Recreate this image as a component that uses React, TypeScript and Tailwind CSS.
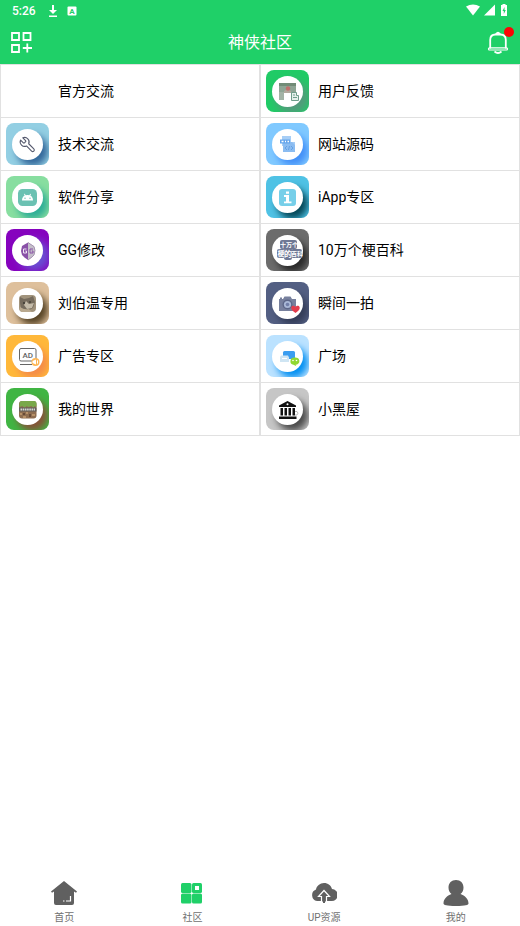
import type { ReactNode } from "react";

type Board = {
  name: string;
  tile?: string;
  shadow?: string;
  icon?: ReactNode;
};

const boards: Board[] = [
  { name: "官方交流" },
  {
    name: "用户反馈",
    tile: "bg-[#20cb66]",
    shadow: "shadow-[5px_6px_8px_1px_#55997d]",
    icon: (
      <>
        <rect x="7" y="7" width="17" height="11" fill="#8fa595" />
        <path d="M7 7h17v3H7z" fill="#728c78" />
        <path d="M7 16h5v8H7z" fill="#a3b3a6" />
        <path d="M12 17h7l2 7h-9z" fill="#fff" />
        <path d="M12 15q3-3 7 0v2h-7z" fill="#b3a89d" />
        <circle cx="16" cy="12.500" r="2.200" fill="#c0706c" />
        <g fill="#e5f0eb" stroke="#6f9d8b" strokeWidth="1">
          <path d="M19.500 16.500h5v3h2v5h-7z" />
          <path d="M21 19h2M21 21.500h4" />
        </g>
      </>
    ),
  },
  {
    name: "技术交流",
    tile: "bg-[#93cfe3]",
    shadow: "shadow-[5px_6px_7px_0px_#34689b]",
    icon: (
      <g transform="translate(24.500 7) scale(-.74 .74)" fill="none" stroke="#565a6e" strokeWidth="1.500" strokeLinejoin="round">
        <path d="M14.700 6.300a1 1 0 0 0 0 1.400l1.600 1.600a1 1 0 0 0 1.400 0l3.770-3.770a6 6 0 0 1-7.940 7.940l-6.910 6.910a2.120 2.120 0 0 1-3-3l6.910-6.910a6 6 0 0 1 7.940-7.940z" />
      </g>
    ),
  },
  {
    name: "网站源码",
    tile: "bg-[#80c9ff]",
    shadow: "shadow-[5px_6px_7px_0px_#4390f8]",
    icon: (
      <>
        <path d="M10 7h9v6h4v10H11V17h-1z" fill="#a7cef6" />
        <path d="M11 13h9l3 3v7H11z" fill="#8bbcf1" />
        <path d="M8 10.500h10v4H8z" fill="#65a5ec" />
        <path d="M9.500 12.500h2M13 12.500h1M15.500 12.500h1.500" stroke="#fff" strokeWidth="1.500" />
        <path d="m15 17-2 2 2 2m4-4 2 2-2 2m-1.500-4-1 4" fill="none" stroke="#5b9be2" strokeWidth=".8" />
      </>
    ),
  },
  {
    name: "软件分享",
    tile: "bg-[#88dea0]",
    shadow: "shadow-[5px_6px_7px_0px_#2fae97]",
    icon: (
      <>
        <rect x="6" y="7" width="19" height="17" rx="4.500" fill="#6bc1b2" />
        <path d="M10 18.500c0-2.400 1-4 2.700-5L12 12l.7-.3 1 1.500a8 8 0 0 1 3.600 0l1-1.500.7.3-.7 1.500c1.700 1 2.700 2.600 2.700 5z" fill="#fff" />
        <circle cx="13" cy="16.200" r=".7" fill="#6bc1b2" />
        <circle cx="18" cy="16.200" r=".7" fill="#6bc1b2" />
      </>
    ),
  },
  {
    name: "iApp专区",
    tile: "bg-[#4fc2e5]",
    shadow: "shadow-[5px_6px_7px_0px_#064858]",
    icon: (
      <>
        <rect x="7" y="7" width="17" height="17" rx="3" fill="#76cfe9" />
        <path d="M14 9.500h3v2.200h-3zM12 13h5v6.500h2.500v1.800H12v-1.800h2V15h-2z" fill="#fff" />
      </>
    ),
  },
  {
    name: "GG修改",
    tile: "bg-[#8603be]",
    shadow: "shadow-[7px_5px_8px_0px_#6950d2]",
    icon: (
      <>
        <path d="m16 7.500 3 2 3 2 1 4-1 4.500-2 2-4 3-3.500-2.500L10 20l-1-4 1-5 2.500-1.500z" fill="#8951a7" />
        <path d="m16 7.500 3 2 3 2 1 4-1 4.500-2 2-4 3z" fill="#c5bfca" />
        <path d="m16 7.500 3 2 3 2 1 4-1 4.500-2 2-4 3" fill="none" stroke="#9d8daa" strokeWidth=".8" />
        <path d="M14.500 14h-3v4h3v-2h-1.200" fill="none" stroke="#eee3f4" strokeWidth="1" />
        <path d="M21 14h-3v4h3v-2h-1.200" fill="none" stroke="#8951a7" strokeWidth="1" />
      </>
    ),
  },
  {
    name: "10万个梗百科",
    tile: "bg-[#6c6c6c]",
    shadow: "shadow-[5px_6px_7px_0px_#292929]",
    icon: (
      <>
        <g fill="#6f7895">
          <rect x="8" y="5" width="17" height="9" rx="2" />
          <rect x="5" y="14" width="8" height="9" rx="2" />
          <rect x="12" y="13" width="8" height="12" rx="2" />
          <rect x="19" y="14" width="11" height="9" rx="2" />
        </g>
        <g fill="#fff" fontFamily="'Noto Sans CJK SC', sans-serif" fontWeight="700">
          <text x="8" y="12" fontSize="6">十万个</text>
          <text x="5.500" y="21" fontSize="7">梗</text>
          <text x="12" y="22" fontSize="8">的</text>
          <text x="19" y="21" fontSize="6">百科</text>
        </g>
      </>
    ),
  },
  {
    name: "刘伯温专用",
    tile: "bg-[#dec09c]",
    shadow: "shadow-[5px_6px_7px_0px_#574426]",
    icon: (
      <>
        <rect x="7" y="7" width="17" height="17" rx="4" fill="#a1937c" />
        <path d="m8 9 4 2 5-1 4-2 2 6-2 6-6 3-6-3-1-5z" fill="#756b5d" />
        <path d="m14 13 3 3 5-1-2 5-5 1-3-4z" fill="#c4bba9" />
        <path d="M8 19q4 3 9 2l3 3H10q-3-1-2-5z" fill="#b9a98f" />
        <circle cx="12" cy="15" r="1" fill="#3d3932" />
        <circle cx="18" cy="14" r="1" fill="#4a4439" />
      </>
    ),
  },
  {
    name: "瞬间一拍",
    tile: "bg-[#535f83]",
    shadow: "shadow-[5px_6px_7px_0px_#343d58]",
    icon: (
      <>
        <path d="M7 11h4l1.500-2.500h6L20 11h4v12H7z" fill="#77809d" />
        <path d="M8 9.500h2V11H8z" fill="#77809d" />
        <circle cx="15.500" cy="16.500" r="5" fill="#5d6788" />
        <circle cx="15.500" cy="16.500" r="3.600" fill="#a9b8d6" />
        <circle cx="15.500" cy="16.500" r="1.800" fill="#717fa8" />
        <path d="M23.500 25c-3-2-4.500-3.500-4.300-5.500.3-2 3-2.500 4.300-.5 1.300-2 4-1.500 4.200.5.200 2-1.200 3.500-4.200 5.500z" fill="#e23d4d" />
      </>
    ),
  },
  {
    name: "广告专区",
    tile: "bg-[#ffb83a]",
    shadow: "shadow-[5px_6px_7px_0px_#f58c49]",
    icon: (
      <>
        <rect x="7.500" y="7.500" width="16.500" height="12.500" rx="1.500" fill="none" stroke="#666" />
        <text x="15.800" y="17" textAnchor="middle" fontFamily="Roboto, sans-serif" fontWeight="500" fontSize="8" fill="#666">AD</text>
        <path d="M8 23.500h12" stroke="#666" />
        <circle cx="23.500" cy="21" r="4" fill="#ffb653" />
        <path d="m20.500 20 3.500-1.500v5L20.500 22zM25 19l1 .7v2.600l-1 .7z" fill="#fff" />
      </>
    ),
  },
  {
    name: "广场",
    tile: "bg-[#bbe2ff]",
    shadow: "shadow-[5px_6px_7px_0px_#0490f2]",
    icon: (
      <>
        <rect x="11" y="10" width="12" height="8" rx="1.500" fill="#3a9df0" />
        <path d="M9 14.500h7l1 2V21H8v-5z" fill="#cfe5f3" />
        <path d="M10 17.500h5" stroke="#fff" />
        <path d="M22.500 16.500a4 3.700 0 1 1 1 7.300l1 1.500-3-1.500a4 3.700 0 0 1 1-7.300z" fill="#90d832" />
        <circle cx="21" cy="19.500" r=".8" fill="#fff" />
        <circle cx="24.500" cy="19.500" r=".8" fill="#fff" />
      </>
    ),
  },
  {
    name: "我的世界",
    tile: "bg-[#40b543]",
    shadow: "shadow-[5px_6px_7px_0px_#855338]",
    icon: (
      <>
        <rect x="7" y="7" width="17.500" height="17.500" rx="3" fill="#8e6d50" />
        <path d="M10 7h12q2.500 0 2.500 3v3l-2-1-1 2-2-2-3 1-2-1-2 2-2-2-3 1v-3q0-3 2.500-3z" fill="#79a84a" />
        <path d="M7 13.500h17.500v4H7z" fill="#62605d" />
        <path d="M8.500 15.500h14.500" stroke="#d8d6d2" strokeWidth="1.800" strokeDasharray="1.600 .6" />
        <path d="M8 19h2v2H8zM14 18h2v2h-2zM20 20h3v2h-3zM11 22h3v2h-3z" fill="#b79168" />
        <path d="M11 19h2v2h-2zM17 20h2v3h-2z" fill="#684b37" />
      </>
    ),
  },
  {
    name: "小黑屋",
    tile: "bg-[#c6c6c6]",
    shadow: "shadow-[5px_6px_7px_0px_#4a4a4a]",
    icon: (
      <>
        <path d="M15.500 7 24 11.500V13H7v-1.500zM8.500 14h2.500v7.500H8.500zM12.500 14H15v7.500h-2.500zM16.500 14H19v7.500h-2.500zM20.500 14H23v7.500h-2.500zM7 22.500h17.500V25H7z" fill="#111" />
        <circle cx="15.500" cy="10.300" r="1" fill="#fff" />
        <path d="M23 17.500h2q2 1.500 0 3.500h-2" fill="none" stroke="#aaa" strokeWidth=".8" />
      </>
    ),
  },
];

function StatusBar() {
  return (
    <div className="flex h-[22px] items-center justify-between px-3 text-white">
      <div className="flex items-center gap-3">
        <span className="text-xs font-medium">5:26</span>
        <svg className="h-3 w-2.5" viewBox="0 0 10 12" fill="#fff">
          <path d="M4 0h2v5h3L5 9 1 5h3zM1 10.500h8v1.500H1z" />
        </svg>
        <svg className="-ml-1 h-3 w-3" viewBox="0 0 12 12">
          <rect x="1.500" y="1.500" width="9" height="9" rx="1" fill="#fff" />
          <text x="6" y="8.800" fontSize="8" fontWeight="700" textAnchor="middle" fill="#1fd068">A</text>
        </svg>
      </div>
      <div className="flex items-center gap-1 pb-0.5">
        <svg className="h-3 w-3.5" viewBox="0 0 14 12" fill="#fff">
          <path d="M0 2.500Q7-1.500 14 2.500L7 11.500z" />
        </svg>
        <svg className="h-3 w-3" viewBox="0 0 12 12" fill="#fff">
          <path d="M11 .5V11.500H0z" />
        </svg>
        <svg className="h-3 w-2" viewBox="0 0 8 12">
          <path d="M2.500 0h3v1H7v11H1V1h1.500z" fill="#fff" />
          <path d="M4.500 3 2.500 7h1.300v3l2-4H4.500z" fill="#1fd068" />
        </svg>
      </div>
    </div>
  );
}

function Header() {
  return (
    <header className="bg-[#1fd068]">
      <StatusBar />
      <div className="flex h-[42px] items-center justify-between px-2.5 text-white">
        <button type="button" aria-label="添加板块">
          <svg className="h-6 w-6" viewBox="0 0 24 24" fill="none" stroke="#fff" strokeWidth="1.800">
            <path d="M2 2h7v7H2zM13.500 2h7v7h-7zM2 14h7v7H2zM17.300 12.500v9M12.800 17h9.200" />
          </svg>
        </button>
        <h1 className="text-base font-normal">神侠社区</h1>
        <button type="button" aria-label="通知" className="relative">
          <svg className="h-6 w-6" viewBox="0 0 24 24" fill="none" stroke="#fff" strokeWidth="1.800">
            <path d="M4.200 17.500V9q0-5.500 5.300-5.500h5Q19.800 3.500 19.800 9v8.500" />
            <rect x="2.500" y="16.800" width="19" height="2.200" rx="1" strokeWidth="1.200" />
            <path d="M8.500 20.500q3.500 3 7 0" strokeWidth="1.800" />
            <path d="M10.200 3q1.800-2.500 3.600 0z" fill="#fff" />
          </svg>
          <span className="absolute -right-1 -top-1 h-2.5 w-2.5 rounded-full bg-[#fb0505]" />
        </button>
      </div>
    </header>
  );
}

function BoardCell({ board }: { board: Board }) {
  return (
    <li className="border-x border-b border-[#e1e1e1]">
      <a href="#" className="flex h-[52px] items-center gap-[9px] pl-[5px]">
        {board.tile ? (
          <span className={`flex h-[42px] w-[43px] shrink-0 items-center justify-center overflow-hidden rounded-lg ${board.tile}`}>
            <span className={`h-[31px] w-[31px] rounded-full bg-white ${board.shadow}`}>
              <svg className="h-[31px] w-[31px]" viewBox="0 0 31 31">
                {board.icon}
              </svg>
            </span>
          </span>
        ) : (
          <span className="h-[42px] w-[43px] shrink-0" />
        )}
        <span className="text-sm text-black">{board.name}</span>
      </a>
    </li>
  );
}

const tabs = [
  {
    name: "首页",
    icon: (
      <>
        <path d="M13 1 26 11.500l-1 1.300-2-1.300V23q0 2-2 2H5q-2 0-2-2V11.500l-2 1.300-1-1.300z" fill="#606060" />
        <path d="M19.500 16v5h-4.500M13.500 21h-1.500" fill="none" stroke="#fff" strokeWidth="1.200" />
      </>
    ),
  },
  {
    name: "社区",
    active: true,
    icon: (
      <>
        <g fill="#1fd068">
          <rect x="2" y="3" width="10.500" height="10" rx="1.500" />
          <rect x="13" y="3" width="10" height="10" rx="1.500" />
          <rect x="2" y="13.500" width="10.500" height="10" rx="1.500" />
          <rect x="13" y="13.500" width="10" height="10" rx="1.500" />
        </g>
        <rect x="16" y="6" width="4" height="4" fill="#fff" />
      </>
    ),
  },
  {
    name: "UP资源",
    icon: (
      <>
        <path d="M6 21a6 6 0 0 1-1-11.500C5.500 6 9 3 13 3s7 2.500 8 6a6 6 0 0 1-.5 12z" fill="#606060" />
        <path d="m7.500 16.500 5.500-6 5.500 6h-3V23h-5v-6.500z" fill="#606060" stroke="#fff" strokeWidth="1.200" />
        <path d="M10 21.500h6V25h-6z" fill="#fff" />
        <path d="M12 15h2v8h-2z" fill="#606060" />
      </>
    ),
  },
  {
    name: "我的",
    icon: (
      <path d="M13 0c4.500 0 7.500 3 7.500 7.500 0 3-1 5-3 6.500 4.500 1.500 8 5 8 9.500 0 1.500-3 2.500-12.500 2.500S.500 25 .500 23.500c0-4.500 3.500-8 8-9.500-2-1.500-3-3.500-3-6.500C5.500 3 8.500 0 13 0z" fill="#606060" />
    ),
  },
];

export default function App() {
  return (
    <div className="flex min-h-screen flex-col bg-white font-[Roboto,'Noto_Sans_CJK_SC',sans-serif]">
      <Header />
      <main className="flex-1">
        <ul className="grid grid-cols-2 border-t border-[#e1e1e1]">
          {boards.map((board) => (
            <BoardCell key={board.name} board={board} />
          ))}
        </ul>
      </main>
      <nav className="flex h-[50px] justify-around">
        {tabs.map((tab) => (
          <a
            key={tab.name}
            href="#"
            aria-current={tab.active ? "page" : undefined}
            className="flex flex-col items-center gap-1.5 pt-1 text-[10px] leading-3 text-[#707070]"
          >
            <svg className="h-[26px] w-[26px]" viewBox="0 0 26 26">
              {tab.icon}
            </svg>
            {tab.name}
          </a>
        ))}
      </nav>
    </div>
  );
}
